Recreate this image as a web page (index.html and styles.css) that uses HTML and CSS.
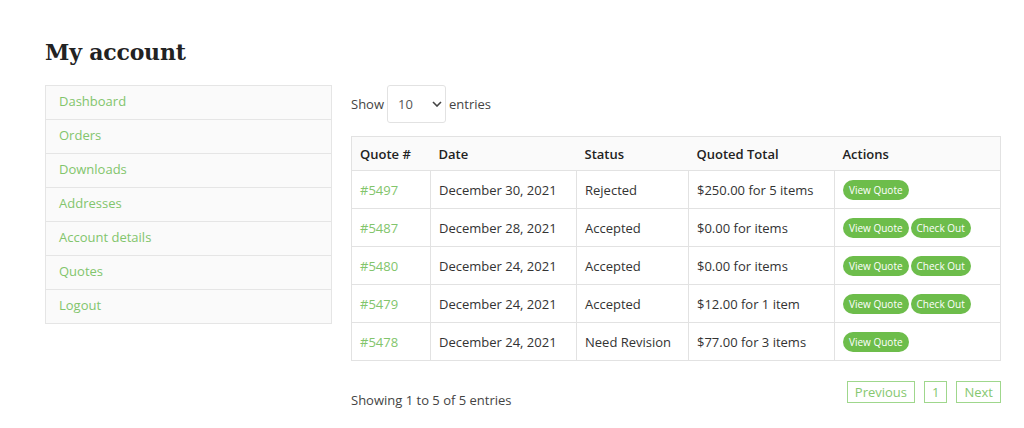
FILE: index.html
```html
<!DOCTYPE html>
<html lang="en">
<head>
    <meta charset="UTF-8">
    <meta name="viewport" content="width=device-width, initial-scale=1.0">
    <title>My account</title>
    <link rel="stylesheet" href="styles.css">
</head>
<body>
    <div class="page">
        <h1>My account</h1>
        <div class="account">
            <ul class="account-nav">
                <li><a href="#">Dashboard</a></li>
                <li><a href="#">Orders</a></li>
                <li><a href="#">Downloads</a></li>
                <li><a href="#">Addresses</a></li>
                <li><a href="#">Account details</a></li>
                <li><a href="#">Quotes</a></li>
                <li><a href="#">Logout</a></li>
            </ul>
            <div class="account-content">
                <div class="length">
                    Show
                    <select class="length-select">
                        <option>10</option>
                        <option>25</option>
                        <option>50</option>
                    </select>
                    entries
                </div>
                <table class="quotes">
                    <colgroup>
                        <col class="col-id">
                        <col class="col-date">
                        <col class="col-status">
                        <col class="col-total">
                        <col class="col-actions">
                    </colgroup>
                    <thead>
                        <tr>
                            <th>Quote #</th>
                            <th>Date</th>
                            <th>Status</th>
                            <th>Quoted Total</th>
                            <th>Actions</th>
                        </tr>
                    </thead>
                    <tbody>
                        <tr>
                            <td><a href="#">#5497</a></td>
                            <td>December 30, 2021</td>
                            <td>Rejected</td>
                            <td>$250.00 for 5 items</td>
                            <td><a class="btn" href="#">View Quote</a></td>
                        </tr>
                        <tr>
                            <td><a href="#">#5487</a></td>
                            <td>December 28, 2021</td>
                            <td>Accepted</td>
                            <td>$0.00 for items</td>
                            <td><a class="btn" href="#">View Quote</a><a class="btn" href="#">Check Out</a></td>
                        </tr>
                        <tr>
                            <td><a href="#">#5480</a></td>
                            <td>December 24, 2021</td>
                            <td>Accepted</td>
                            <td>$0.00 for items</td>
                            <td><a class="btn" href="#">View Quote</a><a class="btn" href="#">Check Out</a></td>
                        </tr>
                        <tr>
                            <td><a href="#">#5479</a></td>
                            <td>December 24, 2021</td>
                            <td>Accepted</td>
                            <td>$12.00 for 1 item</td>
                            <td><a class="btn" href="#">View Quote</a><a class="btn" href="#">Check Out</a></td>
                        </tr>
                        <tr>
                            <td><a href="#">#5478</a></td>
                            <td>December 24, 2021</td>
                            <td>Need Revision</td>
                            <td>$77.00 for 3 items</td>
                            <td><a class="btn" href="#">View Quote</a></td>
                        </tr>
                    </tbody>
                </table>
                <div class="table-footer">
                    <div class="info">Showing 1 to 5 of 5 entries</div>
                    <div class="paging">
                        <a href="#" class="page-btn">Previous</a>
                        <a href="#" class="page-btn">1</a>
                        <a href="#" class="page-btn">Next</a>
                    </div>
                </div>
            </div>
        </div>
    </div>
</body>
</html>
```

FILE: styles.css
```css
body {
    margin: 0;
    font-family: "Open Sans", Arial, sans-serif;
    font-size: 13px;
    color: #333;
    background: #fff;
}

a {
    color: #82c56c;
    text-decoration: none;
}

.page {
    padding: 36px 24px 0 45px;
}

h1 {
    font-family: "DejaVu Serif", Georgia, serif;
    font-size: 22px;
    font-weight: bold;
    color: #222;
    margin: 0 0 17px;
    line-height: 32px;
    letter-spacing: -0.2px;
}

.account {
    display: flex;
    align-items: flex-start;
}

/* Sidebar navigation */
.account-nav {
    list-style: none;
    margin: 0;
    padding: 0;
    width: 285px;
    flex-shrink: 0;
    border: 1px solid #e5e5e5;
    border-bottom: none;
    background: #fafafa;
}

.account-nav li {
    border-bottom: 1px solid #e5e5e5;
}

.account-nav a {
    display: block;
    padding: 0 13px 2px;
    line-height: 31px;
}

.account-content {
    margin-left: 19px;
    width: 650px;
}

.length {
    display: flex;
    align-items: center;
    gap: 3px;
    height: 38px;
    color: #444;
}

.length-select {
    appearance: none;
    width: 59px;
    height: 38px;
    padding: 0 0 0 10px;
    border: 1px solid #e2e2e2;
    border-radius: 3px;
    background: #fff url("data:image/svg+xml;utf8,<svg xmlns='http://www.w3.org/2000/svg' width='10' height='6' viewBox='0 0 10 6'><path d='M1 1l4 4 4-4' fill='none' stroke='%23444' stroke-width='1.6'/></svg>") no-repeat right 3px center;
    font-family: inherit;
    font-size: 13px;
    color: #555;
}

/* Quotes table */
.quotes {
    margin-top: 13px;
    width: 650px;
    table-layout: fixed;
    border-collapse: collapse;
    border: 1px solid #e2e2e2;
}

.col-id { width: 79px; }
.col-date { width: 146px; }
.col-status { width: 112px; }
.col-total { width: 146px; }

.quotes th {
    text-align: left;
    font-weight: 600;
    color: #222;
    background: #fafafa;
    height: 33px;
    padding: 0 8px;
    border-bottom: 1px solid #e2e2e2;
}

.quotes td {
    height: 37px;
    padding: 0 8px;
    border: 1px solid #e2e2e2;
    white-space: nowrap;
}

.btn {
    display: inline-block;
    background: #6dbd4b;
    color: #fff;
    font-size: 10px;
    line-height: 20px;
    padding: 0 6px;
    border-radius: 10px;
    margin-right: 2px;
    vertical-align: middle;
}

.table-footer {
    display: flex;
    justify-content: space-between;
    align-items: flex-start;
    margin-top: 20px;
}

.info {
    margin-top: 10px;
    color: #444;
}

.paging {
    display: flex;
    gap: 9px;
}

.page-btn {
    display: block;
    border: 1px solid #9fd78c;
    line-height: 20px;
    padding: 0 7px;
    font-size: 13px;
    color: #86c870;
}
```
